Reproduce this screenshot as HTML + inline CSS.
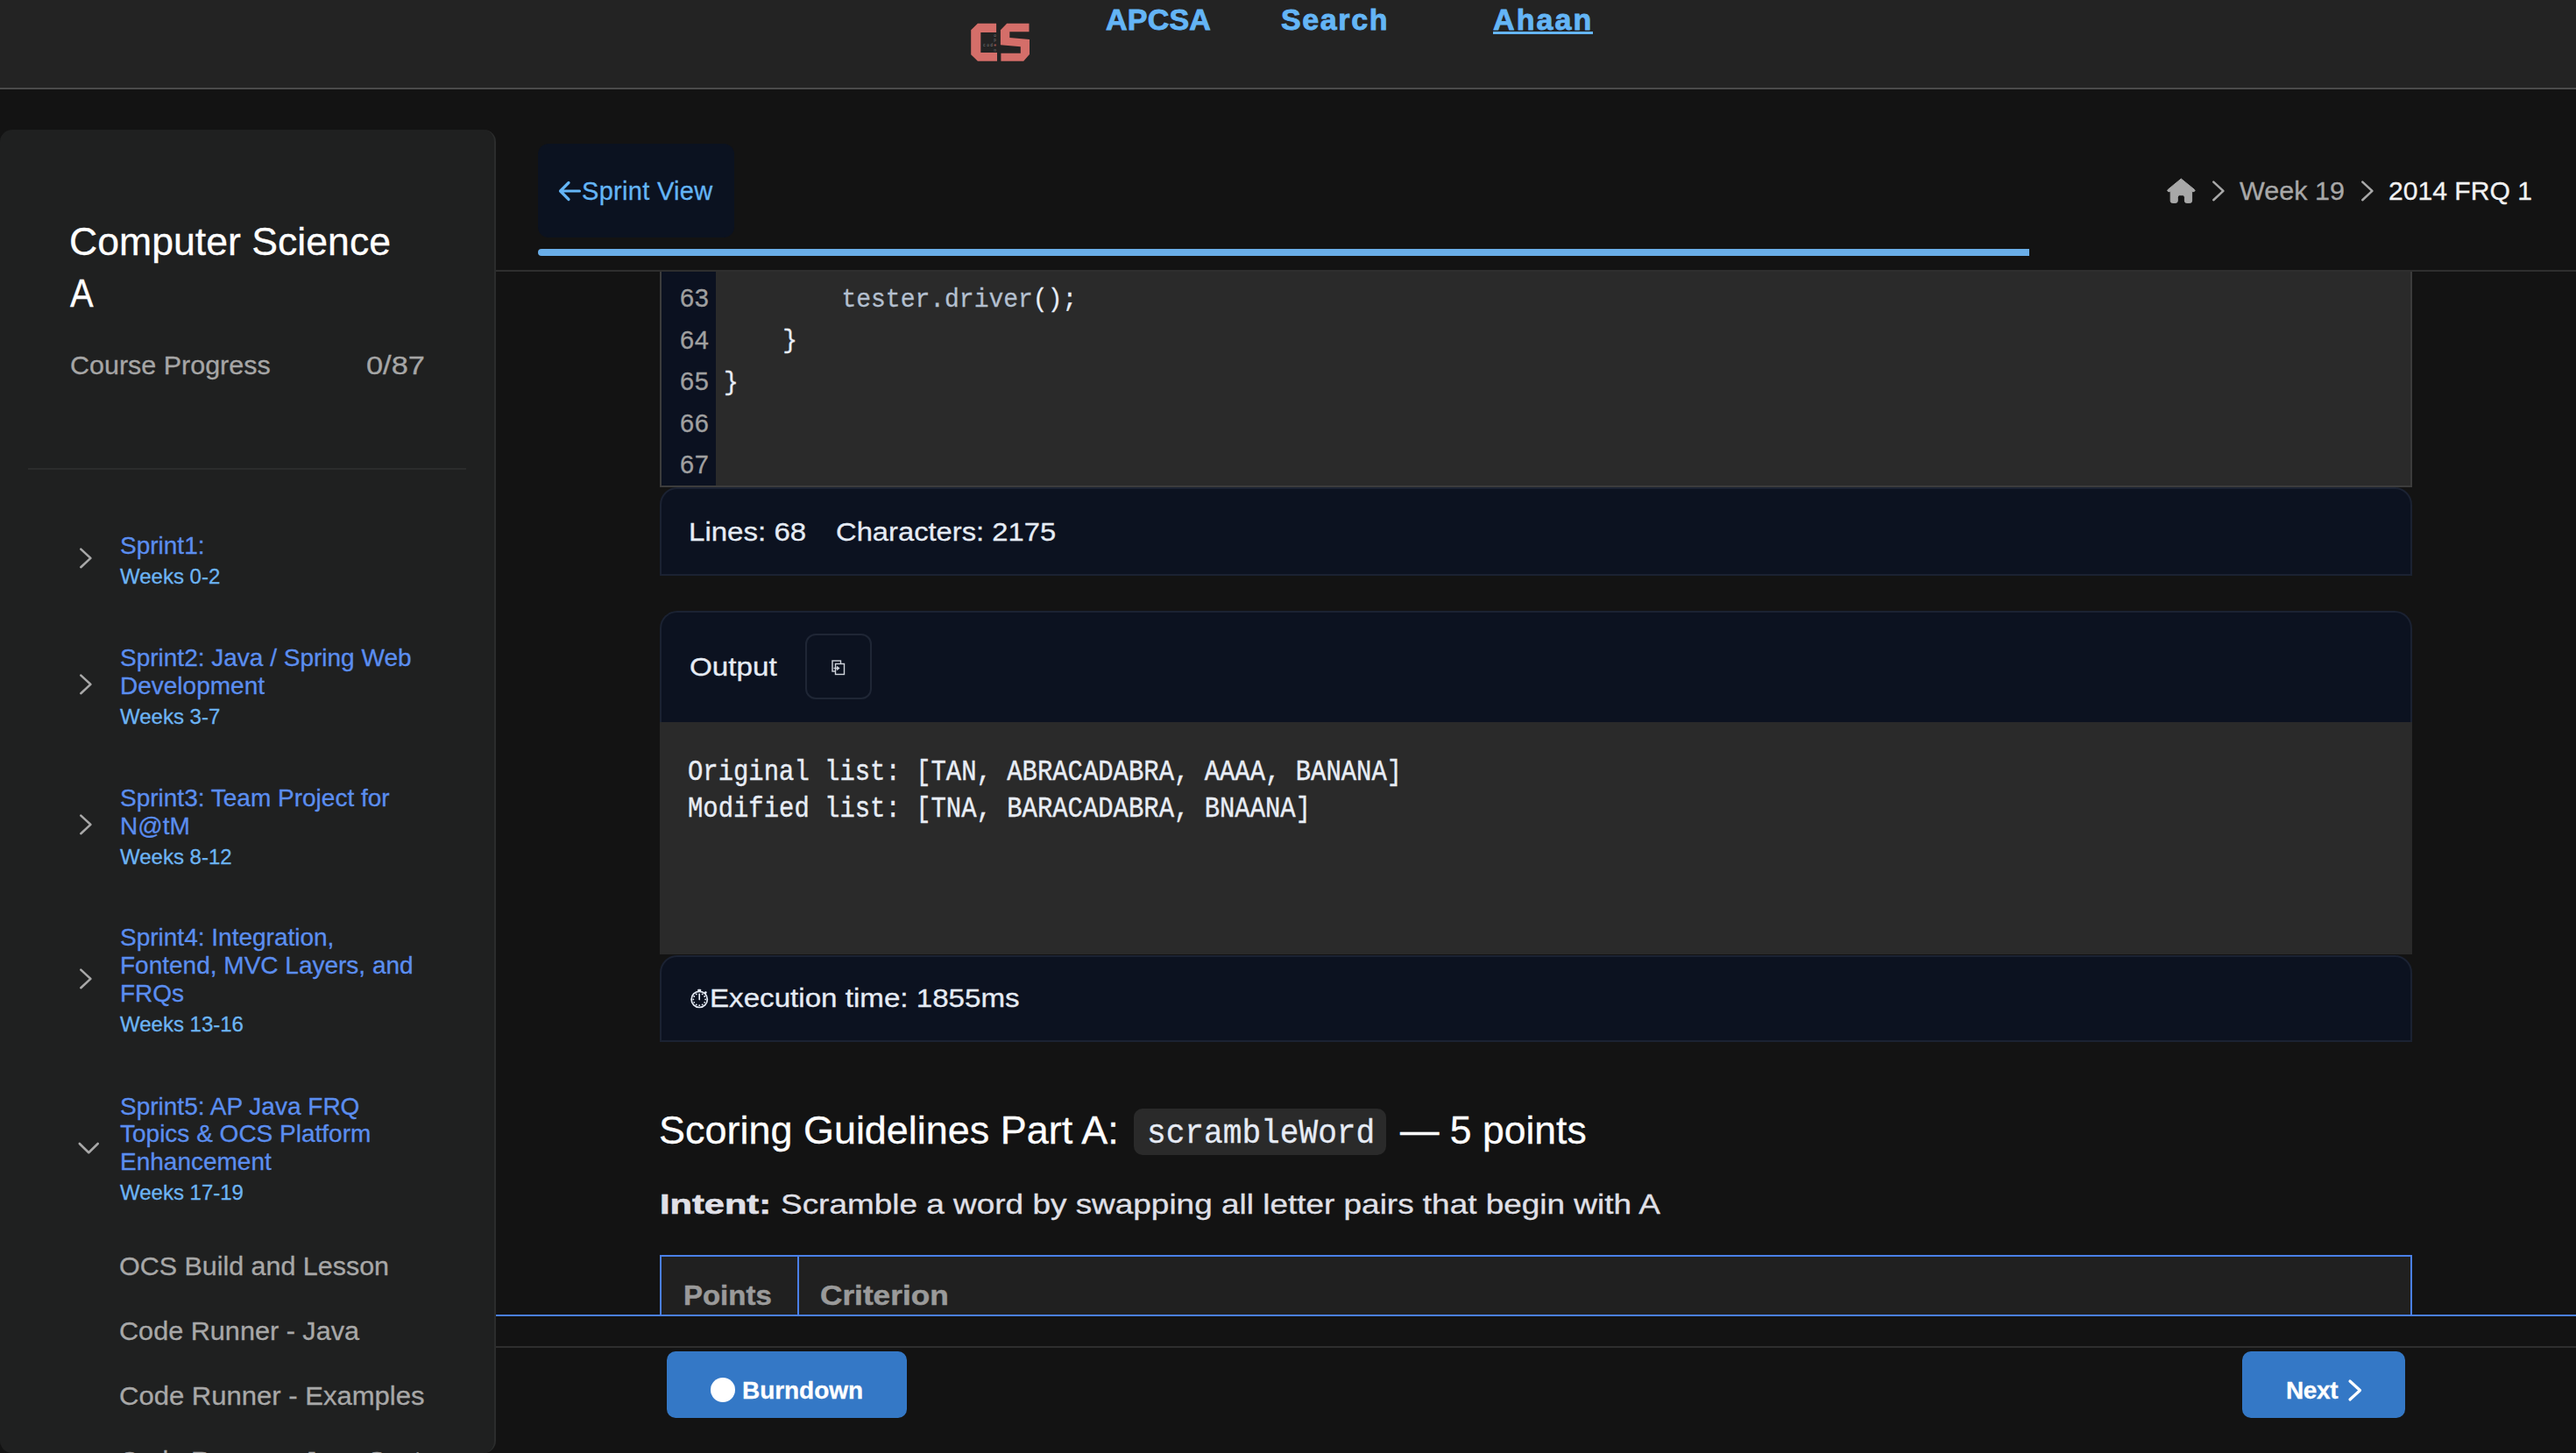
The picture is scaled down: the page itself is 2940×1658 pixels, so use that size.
<!DOCTYPE html>
<html><head><meta charset="utf-8"><title>2014 FRQ 1</title>
<style>html,body{margin:0;padding:0;width:2940px;height:1658px;overflow:hidden;background:#131313;}
body{position:relative;font-family:"Liberation Sans", sans-serif;}
@media (max-width:2000px){html{zoom:0.5}}</style></head>
<body>
<div style="position:absolute;left:0px;top:0px;width:2940px;height:100px;background:#232323"></div>
<div style="position:absolute;left:0px;top:100px;width:2940px;height:2px;background:#4a4a4a"></div>
<svg style="position:absolute;left:1100px;top:15px" width="90" height="70" viewBox="0 0 90 70">
<polygon fill="#d46e69" points="8.2,19.3 15.9,11.8 37.1,11.8 37.1,21.9 19.3,21.9 19.3,45 38,45 38,54.7 15.9,54.7 8.2,47.2"/>
<polygon fill="#d46e69" points="41.9,19.3 49.2,11.8 74.5,11.8 74.5,21.2 52.3,21.2 52.3,27.9 75,30 75,46.9 68.2,54.7 42.4,54.7 42.4,45.8 64.8,45.8 64.8,38.3 41.9,36.2"/>
<g font-family="Liberation Mono" font-size="4.6" fill="#7a7a7a"><text x="22" y="38.4">c</text><text x="26.2" y="38.4">o</text><text x="30.2" y="38.4">d</text>
<text x="34.2" y="26.8">o</text><text x="34.2" y="32.4">p</text><text x="34.2" y="43.8">n</text></g><text x="34.2" y="38.4" font-family="Liberation Mono" font-size="4.6" fill="#d46e69">e</text>
</svg>
<div style="position:absolute;left:1262px;top:5.21px;font-family:'Liberation Sans', sans-serif;font-size:34px;line-height:34px;color:#64b5f6;font-weight:700;white-space:pre;letter-spacing:0.2px;-webkit-text-stroke:0.9px #64b5f6">APCSA</div>
<div style="position:absolute;left:1462px;top:5.21px;font-family:'Liberation Sans', sans-serif;font-size:34px;line-height:34px;color:#64b5f6;font-weight:700;white-space:pre;letter-spacing:1.6px;-webkit-text-stroke:0.9px #64b5f6">Search</div>
<div style="position:absolute;left:1704px;top:5.21px;font-family:'Liberation Sans', sans-serif;font-size:34px;line-height:34px;color:#64b5f6;font-weight:700;white-space:pre;letter-spacing:2.1px;-webkit-text-stroke:0.9px #64b5f6">Ahaan</div>
<div style="position:absolute;left:1704px;top:36px;width:114px;height:3px;background:#64b5f6"></div>
<div style="position:absolute;left:0px;top:102px;width:2940px;height:1556px;background:#131313"></div>
<div style="position:absolute;left:0px;top:148px;width:566px;height:1510px;background:#1f2020;border-radius:14px;box-sizing:border-box;border-right:2px solid #2b2c2c"></div>
<div style="position:absolute;left:78.97px;top:253.75px;font-family:'Liberation Sans', sans-serif;font-size:44px;line-height:44px;color:#ffffff;font-weight:400;white-space:pre;transform:scaleX(1.014);transform-origin:0 0;-webkit-text-stroke:0.3px currentColor;">Computer Science</div>
<div style="position:absolute;left:80px;top:312.75px;font-family:'Liberation Sans', sans-serif;font-size:44px;line-height:44px;color:#ffffff;font-weight:400;white-space:pre;transform:scaleX(0.905);transform-origin:0 0;-webkit-text-stroke:0.3px currentColor;">A</div>
<div style="position:absolute;left:79.95px;top:403.45px;font-family:'Liberation Sans', sans-serif;font-size:29px;line-height:29px;color:#a6a6a6;font-weight:400;white-space:pre;transform:scaleX(1.0509);transform-origin:0 0;-webkit-text-stroke:0.3px currentColor;">Course Progress</div>
<div style="position:absolute;left:417.81px;top:403.45px;font-family:'Liberation Sans', sans-serif;font-size:29px;line-height:29px;color:#a6a6a6;font-weight:400;white-space:pre;transform:scaleX(1.1852);transform-origin:0 0;-webkit-text-stroke:0.3px currentColor;">0/87</div>
<div style="position:absolute;left:32px;top:534px;width:500px;height:2px;background:#2b2c2c"></div>
<svg style="position:absolute;left:90px;top:624px" width="16" height="26" viewBox="0 0 16 26"><polyline points="2.3,2.6 13.4,12.9 2.3,23.2" fill="none" stroke="#a8a8a8" stroke-width="2.6" stroke-linecap="round" stroke-linejoin="round"/></svg>
<div style="position:absolute;left:137px;top:609.29px;font-family:'Liberation Sans', sans-serif;font-size:28px;line-height:28px;color:#5b8ef0;font-weight:400;white-space:pre;-webkit-text-stroke:0.3px currentColor;">Sprint1:</div>
<div style="position:absolute;left:137px;top:645.68px;font-family:'Liberation Sans', sans-serif;font-size:24px;line-height:24px;color:#6cb4f4;font-weight:400;white-space:pre;-webkit-text-stroke:0.3px currentColor;">Weeks 0-2</div>
<svg style="position:absolute;left:90px;top:767.7px" width="16" height="26" viewBox="0 0 16 26"><polyline points="2.3,2.6 13.4,12.9 2.3,23.2" fill="none" stroke="#a8a8a8" stroke-width="2.6" stroke-linecap="round" stroke-linejoin="round"/></svg>
<div style="position:absolute;left:137px;top:737.29px;font-family:'Liberation Sans', sans-serif;font-size:28px;line-height:28px;color:#5b8ef0;font-weight:400;white-space:pre;-webkit-text-stroke:0.3px currentColor;">Sprint2: Java / Spring Web</div>
<div style="position:absolute;left:137px;top:769.29px;font-family:'Liberation Sans', sans-serif;font-size:28px;line-height:28px;color:#5b8ef0;font-weight:400;white-space:pre;-webkit-text-stroke:0.3px currentColor;">Development</div>
<div style="position:absolute;left:137px;top:805.68px;font-family:'Liberation Sans', sans-serif;font-size:24px;line-height:24px;color:#6cb4f4;font-weight:400;white-space:pre;-webkit-text-stroke:0.3px currentColor;">Weeks 3-7</div>
<svg style="position:absolute;left:90px;top:928.2px" width="16" height="26" viewBox="0 0 16 26"><polyline points="2.3,2.6 13.4,12.9 2.3,23.2" fill="none" stroke="#a8a8a8" stroke-width="2.6" stroke-linecap="round" stroke-linejoin="round"/></svg>
<div style="position:absolute;left:137px;top:897.29px;font-family:'Liberation Sans', sans-serif;font-size:28px;line-height:28px;color:#5b8ef0;font-weight:400;white-space:pre;-webkit-text-stroke:0.3px currentColor;">Sprint3: Team Project for</div>
<div style="position:absolute;left:137px;top:929.29px;font-family:'Liberation Sans', sans-serif;font-size:28px;line-height:28px;color:#5b8ef0;font-weight:400;white-space:pre;-webkit-text-stroke:0.3px currentColor;">N@tM</div>
<div style="position:absolute;left:137px;top:965.68px;font-family:'Liberation Sans', sans-serif;font-size:24px;line-height:24px;color:#6cb4f4;font-weight:400;white-space:pre;-webkit-text-stroke:0.3px currentColor;">Weeks 8-12</div>
<svg style="position:absolute;left:90px;top:1104.4px" width="16" height="26" viewBox="0 0 16 26"><polyline points="2.3,2.6 13.4,12.9 2.3,23.2" fill="none" stroke="#a8a8a8" stroke-width="2.6" stroke-linecap="round" stroke-linejoin="round"/></svg>
<div style="position:absolute;left:137px;top:1056.29px;font-family:'Liberation Sans', sans-serif;font-size:28px;line-height:28px;color:#5b8ef0;font-weight:400;white-space:pre;-webkit-text-stroke:0.3px currentColor;">Sprint4: Integration,</div>
<div style="position:absolute;left:137px;top:1088.29px;font-family:'Liberation Sans', sans-serif;font-size:28px;line-height:28px;color:#5b8ef0;font-weight:400;white-space:pre;-webkit-text-stroke:0.3px currentColor;">Fontend, MVC Layers, and</div>
<div style="position:absolute;left:137px;top:1120.29px;font-family:'Liberation Sans', sans-serif;font-size:28px;line-height:28px;color:#5b8ef0;font-weight:400;white-space:pre;-webkit-text-stroke:0.3px currentColor;">FRQs</div>
<div style="position:absolute;left:137px;top:1156.68px;font-family:'Liberation Sans', sans-serif;font-size:24px;line-height:24px;color:#6cb4f4;font-weight:400;white-space:pre;-webkit-text-stroke:0.3px currentColor;">Weeks 13-16</div>
<svg style="position:absolute;left:88px;top:1302px" width="26" height="16" viewBox="0 0 26 16"><polyline points="2.8,3.0 13.25,13.2 23.7,3.0" fill="none" stroke="#a8a8a8" stroke-width="2.6" stroke-linecap="round" stroke-linejoin="round"/></svg>
<div style="position:absolute;left:137px;top:1249.29px;font-family:'Liberation Sans', sans-serif;font-size:28px;line-height:28px;color:#5b8ef0;font-weight:400;white-space:pre;-webkit-text-stroke:0.3px currentColor;">Sprint5: AP Java FRQ</div>
<div style="position:absolute;left:137px;top:1280.29px;font-family:'Liberation Sans', sans-serif;font-size:28px;line-height:28px;color:#5b8ef0;font-weight:400;white-space:pre;-webkit-text-stroke:0.3px currentColor;">Topics &amp; OCS Platform</div>
<div style="position:absolute;left:137px;top:1312.29px;font-family:'Liberation Sans', sans-serif;font-size:28px;line-height:28px;color:#5b8ef0;font-weight:400;white-space:pre;-webkit-text-stroke:0.3px currentColor;">Enhancement</div>
<div style="position:absolute;left:137px;top:1348.68px;font-family:'Liberation Sans', sans-serif;font-size:24px;line-height:24px;color:#6cb4f4;font-weight:400;white-space:pre;-webkit-text-stroke:0.3px currentColor;">Weeks 17-19</div>
<div style="position:absolute;left:136.15px;top:1431.45px;font-family:'Liberation Sans', sans-serif;font-size:29px;line-height:29px;color:#a8a8a8;font-weight:400;white-space:pre;transform:scaleX(1.0498);transform-origin:0 0;-webkit-text-stroke:0.3px currentColor;">OCS Build and Lesson</div>
<div style="position:absolute;left:136.14px;top:1505.45px;font-family:'Liberation Sans', sans-serif;font-size:29px;line-height:29px;color:#a8a8a8;font-weight:400;white-space:pre;transform:scaleX(1.056);transform-origin:0 0;-webkit-text-stroke:0.3px currentColor;">Code Runner - Java</div>
<div style="position:absolute;left:136.13px;top:1579.45px;font-family:'Liberation Sans', sans-serif;font-size:29px;line-height:29px;color:#a8a8a8;font-weight:400;white-space:pre;transform:scaleX(1.0704);transform-origin:0 0;-webkit-text-stroke:0.3px currentColor;">Code Runner - Examples</div>
<div style="position:absolute;left:136.14px;top:1652.95px;font-family:'Liberation Sans', sans-serif;font-size:29px;line-height:29px;color:#a8a8a8;font-weight:400;white-space:pre;transform:scaleX(1.06);transform-origin:0 0;-webkit-text-stroke:0.3px currentColor;">Code Runner - Java Syntax</div>
<div style="position:absolute;left:614px;top:164px;width:224px;height:107px;background:#0b1220;border-radius:12px"></div>
<svg style="position:absolute;left:636px;top:205px" width="28" height="26" viewBox="0 0 28 26"><path d="M25.5 13 L4 13 M13 3.5 L3.5 13 L13 22.5" fill="none" stroke="#64b5f6" stroke-width="3.2" stroke-linecap="round" stroke-linejoin="round"/></svg>
<div style="position:absolute;left:664px;top:203.95px;font-family:'Liberation Sans', sans-serif;font-size:29px;line-height:29px;color:#64b5f6;font-weight:400;white-space:pre;letter-spacing:0.3px;-webkit-text-stroke:0.3px currentColor;">Sprint View</div>
<div style="position:absolute;left:614px;top:284px;width:1702px;height:8px;background:#6aaee8;border-radius:4px 0 0 4px"></div>
<div style="position:absolute;left:566px;top:308px;width:2374px;height:2px;background:#2e2e2e"></div>
<svg style="position:absolute;left:2465px;top:195px" width="50" height="45" viewBox="0 0 50 45"><path fill="#a8a8a8" stroke="#a8a8a8" stroke-width="1" stroke-linejoin="round" d="M24.3 9 L39.6 21.4 Q40.8 22.8 39.2 23.6 L36.6 23.6 L36.6 34.2 Q36.6 36.4 34.4 36.4 L30.6 36.4 Q28.4 36.4 28.4 34.2 L28.4 30.2 Q28.4 27.7 26.2 27.7 L22.5 27.7 Q20.3 27.7 20.3 30.2 L20.3 34.2 Q20.3 36.4 18.1 36.4 L14.4 36.4 Q12.2 36.4 12.2 34.2 L12.2 23.6 L9.6 23.6 Q8 22.8 9.2 21.4 Z"/></svg>
<svg style="position:absolute;left:2524px;top:205px" width="16" height="26" viewBox="0 0 16 26"><polyline points="2.3,2.6 13.4,12.9 2.3,23.2" fill="none" stroke="#a8a8a8" stroke-width="2.6" stroke-linecap="round" stroke-linejoin="round"/></svg>
<div style="position:absolute;left:2556.0px;top:204.45px;font-family:'Liberation Sans', sans-serif;font-size:29px;line-height:29px;color:#a8a8a8;font-weight:400;white-space:pre;transform:scaleX(1.0531);transform-origin:0 0;-webkit-text-stroke:0.3px currentColor;">Week 19</div>
<svg style="position:absolute;left:2694px;top:205px" width="16" height="26" viewBox="0 0 16 26"><polyline points="2.3,2.6 13.4,12.9 2.3,23.2" fill="none" stroke="#a8a8a8" stroke-width="2.6" stroke-linecap="round" stroke-linejoin="round"/></svg>
<div style="position:absolute;left:2725.96px;top:204.45px;font-family:'Liberation Sans', sans-serif;font-size:29px;line-height:29px;color:#f2f2f2;font-weight:400;white-space:pre;transform:scaleX(1.0385);transform-origin:0 0;-webkit-text-stroke:0.3px currentColor;">2014 FRQ 1</div>
<div style="position:absolute;left:753px;top:310px;width:2000px;height:246px;background:#2a2a2a;box-sizing:border-box;border:2px solid #3c3c3c;border-top:none"></div>
<div style="position:absolute;left:755px;top:310px;width:62px;height:244px;background:#0b1120"></div>
<div style="position:absolute;left:776px;top:325.95px;font-family:'Liberation Sans', sans-serif;font-size:29px;line-height:29px;color:#a0a0a0;font-weight:400;white-space:pre;letter-spacing:0.5px;-webkit-text-stroke:0.3px currentColor;">63</div>
<div style="position:absolute;left:776px;top:373.55px;font-family:'Liberation Sans', sans-serif;font-size:29px;line-height:29px;color:#a0a0a0;font-weight:400;white-space:pre;letter-spacing:0.5px;-webkit-text-stroke:0.3px currentColor;">64</div>
<div style="position:absolute;left:776px;top:421.15px;font-family:'Liberation Sans', sans-serif;font-size:29px;line-height:29px;color:#a0a0a0;font-weight:400;white-space:pre;letter-spacing:0.5px;-webkit-text-stroke:0.3px currentColor;">65</div>
<div style="position:absolute;left:776px;top:468.75px;font-family:'Liberation Sans', sans-serif;font-size:29px;line-height:29px;color:#a0a0a0;font-weight:400;white-space:pre;letter-spacing:0.5px;-webkit-text-stroke:0.3px currentColor;">66</div>
<div style="position:absolute;left:776px;top:516.35px;font-family:'Liberation Sans', sans-serif;font-size:29px;line-height:29px;color:#a0a0a0;font-weight:400;white-space:pre;letter-spacing:0.5px;-webkit-text-stroke:0.3px currentColor;">67</div>
<div style="position:absolute;left:826px;top:326.52px;font-family:'Liberation Mono', monospace;font-size:30px;line-height:30px;color:#e8eef8;font-weight:400;white-space:pre;transform:scaleX(0.9333);transform-origin:0 0;-webkit-text-stroke:0.3px currentColor">        <span style="color:#b4c0d0">tester.driver</span>();</div>
<div style="position:absolute;left:826px;top:374.02px;font-family:'Liberation Mono', monospace;font-size:30px;line-height:30px;color:#e8eef8;font-weight:400;white-space:pre;transform:scaleX(0.9333);transform-origin:0 0;-webkit-text-stroke:0.3px currentColor">    }</div>
<div style="position:absolute;left:826px;top:421.52px;font-family:'Liberation Mono', monospace;font-size:30px;line-height:30px;color:#e8eef8;font-weight:400;white-space:pre;transform:scaleX(0.9333);transform-origin:0 0;-webkit-text-stroke:0.3px currentColor">}</div>
<div style="position:absolute;left:753px;top:556px;width:2000px;height:101px;background:#0c1220;box-sizing:border-box;border:2px solid #1b2232;border-radius:20px 20px 0 0"></div>
<div style="position:absolute;left:786.3px;top:591.6px;font-family:'Liberation Sans', sans-serif;font-size:30px;line-height:30px;color:#e6ecf5;font-weight:400;white-space:pre;transform:scaleX(1.1017);transform-origin:0 0;-webkit-text-stroke:0.3px currentColor;">Lines: 68</div>
<div style="position:absolute;left:953.61px;top:591.6px;font-family:'Liberation Sans', sans-serif;font-size:30px;line-height:30px;color:#e6ecf5;font-weight:400;white-space:pre;transform:scaleX(1.0912);transform-origin:0 0;-webkit-text-stroke:0.3px currentColor;">Characters: 2175</div>
<div style="position:absolute;left:753px;top:697px;width:2000px;height:127px;background:#0c1220;box-sizing:border-box;border:2px solid #1b2232;border-bottom:none;border-radius:20px 20px 0 0"></div>
<div style="position:absolute;left:786.89px;top:745.6px;font-family:'Liberation Sans', sans-serif;font-size:30px;line-height:30px;color:#e6ecf5;font-weight:400;white-space:pre;transform:scaleX(1.1079);transform-origin:0 0;-webkit-text-stroke:0.3px currentColor;">Output</div>
<div style="position:absolute;left:919px;top:723px;width:76px;height:75px;box-sizing:border-box;border:2px solid #1f2635;border-radius:12px"></div>
<svg style="position:absolute;left:949px;top:753px" width="17" height="18" viewBox="0 0 17 18"><rect x="1" y="1" width="9.5" height="12" fill="none" stroke="#d0d4dc" stroke-width="1.4"/><rect x="4.5" y="4.5" width="10" height="12" fill="#0c1220" stroke="#d0d4dc" stroke-width="1.4"/><path d="M2.5 9.5 L8 9.5 M6 7.5 L8.5 9.5 L6 11.5" fill="none" stroke="#d0d4dc" stroke-width="1.4"/></svg>
<div style="position:absolute;left:753px;top:824px;width:2000px;height:265px;background:#2a2a2a"></div>
<div style="position:absolute;left:785px;top:863.95px;font-family:'Liberation Mono', monospace;font-size:34px;line-height:34px;color:#e8edf5;font-weight:400;white-space:pre;transform:scaleX(0.85);transform-origin:0 0;-webkit-text-stroke:0.4px #e8edf5">Original list: [TAN, ABRACADABRA, AAAA, BANANA]</div>
<div style="position:absolute;left:785px;top:906.45px;font-family:'Liberation Mono', monospace;font-size:34px;line-height:34px;color:#e8edf5;font-weight:400;white-space:pre;transform:scaleX(0.85);transform-origin:0 0;-webkit-text-stroke:0.4px #e8edf5">Modified list: [TNA, BARACADABRA, BNAANA]</div>
<div style="position:absolute;left:753px;top:1090px;width:2000px;height:99px;background:#0c1220;box-sizing:border-box;border:2px solid #1b2232;border-radius:20px 20px 0 0"></div>
<svg style="position:absolute;left:787px;top:1127px" width="24" height="24" viewBox="0 0 24 24"><circle cx="11.2" cy="13.4" r="9.1" fill="none" stroke="#e6ecf5" stroke-width="1.7"/><rect x="9.2" y="1.8" width="4" height="2.6" rx="0.8" fill="#e6ecf5"/><line x1="11.2" y1="7.2" x2="11.2" y2="13.6" stroke="#e6ecf5" stroke-width="1.6" stroke-linecap="round"/><circle cx="14.65" cy="7.42" r="0.95" fill="#e6ecf5"/><circle cx="17.18" cy="9.95" r="0.95" fill="#e6ecf5"/><circle cx="18.10" cy="13.40" r="0.95" fill="#e6ecf5"/><circle cx="17.18" cy="16.85" r="0.95" fill="#e6ecf5"/><circle cx="14.65" cy="19.38" r="0.95" fill="#e6ecf5"/><circle cx="11.20" cy="20.30" r="0.95" fill="#e6ecf5"/><circle cx="7.75" cy="19.38" r="0.95" fill="#e6ecf5"/><circle cx="5.22" cy="16.85" r="0.95" fill="#e6ecf5"/><circle cx="4.30" cy="13.40" r="0.95" fill="#e6ecf5"/><circle cx="5.22" cy="9.95" r="0.95" fill="#e6ecf5"/><circle cx="7.75" cy="7.42" r="0.95" fill="#e6ecf5"/><circle cx="18.3" cy="5.6" r="1.4" fill="#e6ecf5"/></svg>
<div style="position:absolute;left:809.71px;top:1125.45px;font-family:'Liberation Sans', sans-serif;font-size:29px;line-height:29px;color:#e6ecf5;font-weight:400;white-space:pre;transform:scaleX(1.1427);transform-origin:0 0;-webkit-text-stroke:0.3px currentColor;">Execution time: 1855ms</div>
<div style="position:absolute;left:752.36px;top:1267.75px;font-family:'Liberation Sans', sans-serif;font-size:44px;line-height:44px;color:#ffffff;font-weight:400;white-space:pre;transform:scaleX(1.0217);transform-origin:0 0;-webkit-text-stroke:0.3px currentColor;">Scoring Guidelines Part A:</div>
<div style="position:absolute;left:1294px;top:1265px;width:288px;height:53px;background:#2a2a2a;border-radius:10px"></div>
<div style="position:absolute;left:1309px;top:1274.82px;font-family:'Liberation Mono', monospace;font-size:39px;line-height:39px;color:#e6ebf5;font-weight:400;white-space:pre;transform:scaleX(0.9265);transform-origin:0 0;-webkit-text-stroke:0.3px #e6ebf5">scrambleWord</div>
<div style="position:absolute;left:1597.7px;top:1267.75px;font-family:'Liberation Sans', sans-serif;font-size:44px;line-height:44px;color:#ffffff;font-weight:400;white-space:pre;transform:scaleX(1.011);transform-origin:0 0;-webkit-text-stroke:0.3px currentColor;">&#8212; 5 points</div>
<div style="position:absolute;left:753px;top:1357.91px;font-family:'Liberation Sans', sans-serif;font-size:32px;line-height:32px;color:#e0e0e8;font-weight:700;white-space:pre;transform:scaleX(1.3);transform-origin:0 0;-webkit-text-stroke:0.6px #e0e0e8">Intent:</div>
<div style="position:absolute;left:890.85px;top:1357.91px;font-family:'Liberation Sans', sans-serif;font-size:32px;line-height:32px;color:#e0e0e8;font-weight:400;white-space:pre;transform:scaleX(1.1542);transform-origin:0 0;-webkit-text-stroke:0.3px currentColor;">Scramble a word by swapping all letter pairs that begin with A</div>
<div style="position:absolute;left:753px;top:1432px;width:2000px;height:80px;background:#202020;box-sizing:border-box;border:2px solid #4a80e8;border-bottom:none"></div>
<div style="position:absolute;left:910px;top:1432px;width:2px;height:70px;background:#4a80e8"></div>
<div style="position:absolute;left:780px;top:1461.91px;font-family:'Liberation Sans', sans-serif;font-size:32px;line-height:32px;color:#9a9a9a;font-weight:700;white-space:pre;transform:scaleX(1.03);transform-origin:0 0;-webkit-text-stroke:0.5px #9a9a9a">Points</div>
<div style="position:absolute;left:936px;top:1461.91px;font-family:'Liberation Sans', sans-serif;font-size:32px;line-height:32px;color:#9a9a9a;font-weight:700;white-space:pre;transform:scaleX(1.1);transform-origin:0 0;-webkit-text-stroke:0.5px #9a9a9a">Criterion</div>
<div style="position:absolute;left:566px;top:1500px;width:2374px;height:158px;background:#131313"></div>
<div style="position:absolute;left:566px;top:1500px;width:2374px;height:2px;background:#4a80e8"></div>
<div style="position:absolute;left:566px;top:1536px;width:2374px;height:2px;background:#2e2e2e"></div>
<div style="position:absolute;left:761px;top:1542px;width:274px;height:76px;background:#3478c6;border-radius:10px"></div>
<div style="position:absolute;left:811px;top:1572px;width:28px;height:28px;background:#ffffff;border-radius:50%"></div>
<div style="position:absolute;left:847px;top:1573.29px;font-family:'Liberation Sans', sans-serif;font-size:28px;line-height:28px;color:#ffffff;font-weight:700;white-space:pre;letter-spacing:-0.05px;-webkit-text-stroke:0.3px currentColor;">Burndown</div>
<div style="position:absolute;left:2559px;top:1542px;width:186px;height:76px;background:#3478c6;border-radius:10px"></div>
<div style="position:absolute;left:2609px;top:1573.29px;font-family:'Liberation Sans', sans-serif;font-size:28px;line-height:28px;color:#ffffff;font-weight:700;white-space:pre;letter-spacing:-0.4px;-webkit-text-stroke:0.3px currentColor;">Next</div>
<svg style="position:absolute;left:2679px;top:1573px" width="18" height="27" viewBox="0 0 18 27"><polyline points="3,3 14.5,13.5 3,24" fill="none" stroke="#ffffff" stroke-width="3.2" stroke-linecap="round" stroke-linejoin="round"/></svg>
</body></html>
